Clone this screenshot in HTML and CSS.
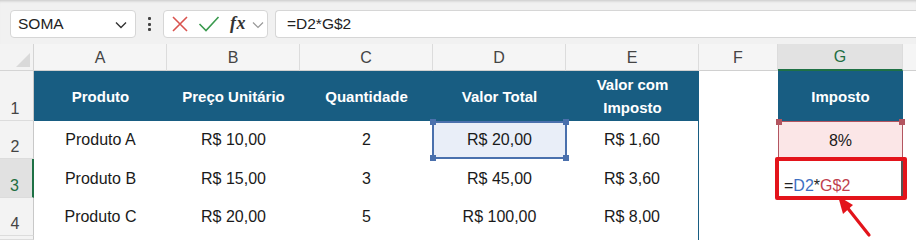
FILE: index.html
```html
<!DOCTYPE html>
<html lang="pt">
<head>
<meta charset="utf-8">
<title>Excel</title>
<link rel="stylesheet" href="styles.css">
</head>
<body>
<div class="app">
  <div class="toolbar">
    <div class="namebox">
      <span class="nb-text">SOMA</span>
      <svg class="nb-chev" width="12" height="8" viewBox="0 0 12 8"><path d="M1 1.5 L6 6.5 L11 1.5" fill="none" stroke="#333" stroke-width="1.4"/></svg>
    </div>
    <div class="vdots"><span></span><span></span><span></span></div>
    <div class="fbtns">
      <svg class="ic-x" width="18" height="18" viewBox="0 0 18 18"><path d="M2 2 L16 16 M16 2 L2 16" stroke="#d9534f" stroke-width="1.6" fill="none"/></svg>
      <svg class="ic-ok" width="22" height="18" viewBox="0 0 22 18"><path d="M1.5 9 L8 15.5 L20.5 2" stroke="#3a9a4e" stroke-width="1.6" fill="none"/></svg>
      <span class="fx">fx</span>
      <svg class="ic-chev" width="12" height="8" viewBox="0 0 12 8"><path d="M1 1.5 L6 6.5 L11 1.5" fill="none" stroke="#999" stroke-width="1.2"/></svg>
    </div>
    <div class="finput">=D2*G$2</div>
  </div>

  <div class="sheet">
    <div class="corner"><span class="tri"></span></div>
    <div class="colh">A</div>
    <div class="colh">B</div>
    <div class="colh">C</div>
    <div class="colh">D</div>
    <div class="colh">E</div>
    <div class="colh">F</div>
    <div class="colh sel">G</div>
    <div class="colh last"></div>

    <div class="rowh">1</div>
    <div class="hd">Produto</div>
    <div class="hd">Preço Unitário</div>
    <div class="hd">Quantidade</div>
    <div class="hd">Valor Total</div>
    <div class="hd">Valor com<br>Imposto</div>
    <div class="c"></div>
    <div class="hd">Imposto</div>
    <div class="c"></div>

    <div class="rowh">2</div>
    <div class="c">Produto A</div>
    <div class="c">R$ 10,00</div>
    <div class="c">2</div>
    <div class="c dsel">R$ 20,00<i class="h tl"></i><i class="h tr"></i><i class="h bl"></i><i class="h br"></i></div>
    <div class="c edge">R$ 1,60</div>
    <div class="c"></div>
    <div class="c gref">8%<i class="h tl"></i><i class="h tr"></i></div>
    <div class="c"></div>

    <div class="rowh rsel">3</div>
    <div class="c">Produto B</div>
    <div class="c">R$ 15,00</div>
    <div class="c">3</div>
    <div class="c">R$ 45,00</div>
    <div class="c edge">R$ 3,60</div>
    <div class="c"></div>
    <div class="c edit"><span class="eq">=</span><span class="ref1">D2</span><span class="eq">*</span><span class="ref2">G$2</span></div>
    <div class="c"></div>

    <div class="rowh">4</div>
    <div class="c">Produto C</div>
    <div class="c">R$ 20,00</div>
    <div class="c">5</div>
    <div class="c">R$ 100,00</div>
    <div class="c edge">R$ 8,00</div>
    <div class="c"></div>
    <div class="c"></div>
    <div class="c"></div>

    <div class="rowh"></div>
    <div class="c"></div>
    <div class="c"></div>
    <div class="c"></div>
    <div class="c"></div>
    <div class="c edge"></div>
    <div class="c"></div>
    <div class="c"></div>
    <div class="c"></div>

    <div class="highlight"></div>
    <svg class="arrow" width="60" height="60" viewBox="820 190 60 60">
      <line x1="869" y1="235" x2="846" y2="206" stroke="#e3141b" stroke-width="3.2" stroke-linecap="round"/>
      <polygon points="838,196 853,205 843,214" fill="#e3141b"/>
    </svg>
  </div>
</div>
</body>
</html>
```

FILE: styles.css
```css
* { box-sizing: border-box; }
html, body { margin: 0; padding: 0; background: #fff; }
body { width: 916px; height: 240px; overflow: hidden; font-family: "Liberation Sans", Arial, sans-serif; }

.app { width: 916px; height: 240px; position: relative; overflow: hidden; }

.toolbar {
  height: 44px;
  background: #f1f1f1;
  display: flex;
  align-items: flex-start;
  padding: 10px 0 0 10px;
  box-shadow: inset 0 3px 3px -2px rgba(0,0,0,0.18);
}
.namebox {
  width: 126px; height: 28px;
  background: #fff;
  border: 1px solid #d6d6d6;
  border-radius: 4px;
  display: flex; align-items: center; justify-content: space-between;
  padding: 0 8px 0 7px;
  font-size: 15.5px; color: #222;
}
.nb-chev { margin-top: 2px; }
.vdots {
  width: 27px; height: 28px;
  display: flex; flex-direction: column; align-items: center; justify-content: center; gap: 2.5px;
}
.vdots span { width: 3px; height: 3px; background: #444; border-radius: 1px; }
.fbtns {
  width: 105px; height: 28px;
  background: #fff;
  border: 1px solid #d6d6d6;
  border-radius: 4px;
  display: flex; align-items: center;
  padding-left: 7px;
}
.ic-x { margin-right: 9px; }
.ic-ok { margin-right: 10px; }
.fx {
  font-family: "Liberation Serif", "DejaVu Serif", serif;
  font-style: italic; font-weight: bold;
  font-size: 18px; color: #333; letter-spacing: 0.5px;
  margin-right: 6px; margin-top: -2px;
}
.ic-chev { margin-top: 2px; }
.finput {
  margin-left: 7px;
  flex: 1; height: 28px;
  background: #fff;
  border: 1px solid #d6d6d6;
  border-right: none;
  border-radius: 4px 0 0 4px;
  display: flex; align-items: center;
  padding-left: 11px;
  font-size: 15.5px; color: #222;
}

.sheet {
  position: relative;
  display: grid;
  grid-template-columns: 34px 133px 133px 133px 133px 133px 79px 125px 1fr;
  grid-template-rows: 27px 50px 38px 39px 38px 4px;
  font-size: 16px;
  color: #1a1a1a;
}
.corner {
  background: #f3f3f3;
  border-right: 1px solid #d4d4d4;
  border-bottom: 1px solid #d4d4d4;
  position: relative;
}
.tri {
  position: absolute; right: 3px; bottom: 3px;
  width: 0; height: 0;
  border-left: 14px solid transparent;
  border-bottom: 14px solid #d9d9d9;
}
.colh {
  background: #f5f5f5;
  border-right: 1px solid #dcdcdc;
  border-bottom: 1px solid #d0d0d0;
  display: flex; align-items: flex-end; justify-content: center;
  padding-bottom: 3px;
  font-size: 16px; color: #444; font-weight: 300;
}
.colh.sel {
  background: #e2e2e2;
  color: #1e6e42;
  border-bottom: 2px solid #1e7145;
}
.colh.last { border-right: none; }
.rowh {
  background: #f3f3f3;
  border-right: 1px solid #c8c8c8;
  border-bottom: 1px solid #dcdcdc;
  display: flex; align-items: flex-end; justify-content: center;
  padding-bottom: 2px; padding-right: 3px;
  font-size: 16px; color: #444;
}
.rowh.rsel {
  background: #e1e1e1;
  color: #1e6e42;
  border-right: 2px solid #1e7145;
}
.hd {
  background: #185d82;
  color: #fff;
  font-weight: bold;
  font-size: 15px;
  line-height: 23px;
  display: flex; align-items: center; justify-content: center;
  text-align: center;
}
.c {
  display: flex; align-items: center; justify-content: center;
  position: relative;
  background: #fff;
}
.edge { border-right: 1px solid #185d82; }
.dsel {
  background: #e9eef8;
  border: 2px solid #4a70ad;
  margin: 0 -1px 0 -1px;
  z-index: 2;
}
.gref {
  background: #fbe6e7;
  border: 1px solid #b35560;
  border-bottom: none;
  z-index: 2;
}
.h {
  position: absolute; width: 6px; height: 6px;
  z-index: 3;
}
.dsel .h { background: #4a70ad; }
.gref .h { background: #b35560; }
.dsel .tl { left: -4px; top: -4px; }
.dsel .tr { right: -4px; top: -4px; }
.dsel .bl { left: -4px; bottom: -4px; }
.dsel .br { right: -4px; bottom: -4px; }
.gref .tl { left: -3px; top: -3px; }
.gref .tr { right: -3px; top: -3px; }
.edit {
  justify-content: flex-start;
  align-items: flex-end;
  padding: 0 0 3px 6px;
  font-size: 16px;
  border-right: 2px solid #555;
}
.eq { color: #222; }
.ref1 { color: #3e6fc2; }
.ref2 { color: #c0404e; }

.highlight {
  position: absolute;
  left: 775px; top: 113px;
  width: 132px; height: 43px;
  border: 4px solid #e3141b;
  border-radius: 2px;
  z-index: 4;
}
.arrow {
  position: absolute;
  left: 820px; top: 146px;
  z-index: 4;
}
```
